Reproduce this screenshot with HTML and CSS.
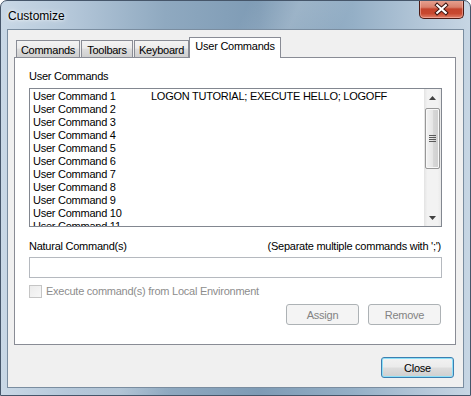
FILE: index.html
```html
<!DOCTYPE html>
<html>
<head>
<meta charset="utf-8">
<title>Customize</title>
<link rel="stylesheet" href="styles.css">
</head>
<body>
<div class="window">
  <div class="titlebar">
    <span class="title">Customize</span>
    <div class="close-x">
      <svg width="45" height="19" viewBox="0 0 45 19">
        <path d="M18 5 L27 13 M27 5 L18 13" stroke="#3b1410" stroke-width="4.2" stroke-linecap="square" fill="none"/>
        <path d="M18 5 L27 13 M27 5 L18 13" stroke="#ffffff" stroke-width="2.2" stroke-linecap="square" fill="none"/>
      </svg>
    </div>
  </div>
  <div class="client">
    <div class="tabs">
      <div class="tab tab-commands">Commands</div>
      <div class="tab tab-toolbars">Toolbars</div>
      <div class="tab tab-keyboard">Keyboard</div>
      <div class="tab tab-active">User Commands</div>
    </div>
    <div class="panel">
      <div class="label">User Commands</div>
      <div class="listbox">
        <div class="rows">
          <div class="row"><span class="c1">User Command 1</span><span class="c2">LOGON TUTORIAL; EXECUTE HELLO; LOGOFF</span></div>
          <div class="row"><span class="c1">User Command 2</span><span class="c2"></span></div>
          <div class="row"><span class="c1">User Command 3</span><span class="c2"></span></div>
          <div class="row"><span class="c1">User Command 4</span><span class="c2"></span></div>
          <div class="row"><span class="c1">User Command 5</span><span class="c2"></span></div>
          <div class="row"><span class="c1">User Command 6</span><span class="c2"></span></div>
          <div class="row"><span class="c1">User Command 7</span><span class="c2"></span></div>
          <div class="row"><span class="c1">User Command 8</span><span class="c2"></span></div>
          <div class="row"><span class="c1">User Command 9</span><span class="c2"></span></div>
          <div class="row"><span class="c1">User Command 10</span><span class="c2"></span></div>
          <div class="row"><span class="c1">User Command 11</span><span class="c2"></span></div>
        </div>
        <div class="scrollbar">
          <div class="sb-btn">
            <svg width="7" height="4" viewBox="0 0 7 4"><path d="M3.5 0 L7 4 L0 4 Z" fill="#404040"/></svg>
          </div>
          <div class="sb-thumb">
            <div class="grip"></div>
          </div>
          <div class="sb-fill"></div>
          <div class="sb-btn">
            <svg width="7" height="4" viewBox="0 0 7 4"><path d="M0 0 L7 0 L3.5 4 Z" fill="#404040"/></svg>
          </div>
        </div>
      </div>
      <div class="label-row">
        <span>Natural Command(s)</span>
        <span>(Separate multiple commands with ';')</span>
      </div>
      <div class="textbox"></div>
      <div class="check-row">
        <span class="checkbox"></span>
        <span class="check-label">Execute command(s) from Local Environment</span>
      </div>
      <div class="button-row">
        <div class="button disabled">Assign</div>
        <div class="button disabled">Remove</div>
      </div>
    </div>
    <div class="footer">
      <div class="button default">Close</div>
    </div>
  </div>
</div>
</body>
</html>
```

FILE: styles.css
```css
html, body {
  margin: 0;
  padding: 0;
}
body {
  width: 471px;
  height: 396px;
  overflow: hidden;
  font-family: "Liberation Sans", Arial, sans-serif;
  font-size: 11px;
  letter-spacing: -0.25px;
  color: #000;
  background: #ffffff;
}
.window {
  width: 471px;
  height: 396px;
  box-sizing: border-box;
  border: 1px solid #46566a;
  border-radius: 7px 7px 0 0;
  display: flex;
  flex-direction: column;
  background:
    linear-gradient(115deg, rgba(255,255,255,0) 0%, rgba(255,255,255,0) 38%, rgba(255,255,255,0.18) 46%, rgba(255,255,255,0) 54%, rgba(255,255,255,0) 100%),
    linear-gradient(to right, #c9d8e6 0%, #b4c7d9 15%, #8fa9c0 35%, #7e9bb5 55%, #94afc6 75%, #b8cadb 92%, #c7d6e4 100%);
  overflow: hidden;
}
.titlebar {
  height: 28px;
  display: flex;
  justify-content: space-between;
  align-items: flex-start;
  padding-left: 7px;
}
.title {
  font-size: 12px;
  letter-spacing: 0;
  line-height: 12px;
  margin-top: 9px;
  color: #000;
  text-shadow: 0 0 6px rgba(255,255,255,0.9), 0 0 3px rgba(255,255,255,0.9);
}
.close-x {
  width: 45px;
  height: 19px;
  margin-right: 6px;
  margin-top: -1px;
  box-sizing: border-box;
  border: 1px solid #4c1a14;
  border-top: none;
  border-radius: 0 0 5px 5px;
  background: linear-gradient(to bottom, #e8a493 0%, #d9806c 40%, #c4442d 50%, #c8482f 75%, #e0806a 100%);
  box-shadow: inset 0 0 0 1px rgba(255,200,190,0.5);
  display: flex;
}
.client {
  margin: 0 6px 7px 6px;
  flex: 1;
  border: 1px solid #7a8da0;
  background: #f0f0f0;
  display: flex;
  flex-direction: column;
}
.tabs {
  display: flex;
  align-items: flex-end;
  height: 20px;
  margin-top: 7px;
  padding-left: 8px;
  position: relative;
  z-index: 1;
}
.tab {
  height: 17px;
  box-sizing: border-box;
  border: 1px solid #898c95;
  border-bottom: none;
  background: linear-gradient(to bottom, #f3f3f3 0%, #ebebeb 45%, #dddddd 50%, #cfcfcf 100%);
  line-height: 18px;
  text-align: center;
  margin-right: 1px;
}
.tab-commands { width: 64px; }
.tab-toolbars { width: 52px; }
.tab-keyboard { width: 55px; }
.tab-active {
  width: 92px;
  height: 21px;
  margin-bottom: -1px;
  margin-left: -1px;
  background: #ffffff;
  line-height: 17px;
}
.panel {
  margin-left: 6px;
  width: 442px;
  box-sizing: border-box;
  border: 1px solid #898c95;
  background: #ffffff;
  padding: 12px 13px 19px 14px;
  display: flex;
  flex-direction: column;
}
.label {
  line-height: 13px;
  height: 13px;
}
.listbox {
  margin-top: 5px;
  height: 139px;
  box-sizing: border-box;
  border: 1px solid #828790;
  background: #ffffff;
  display: flex;
}
.rows {
  flex: 1;
  overflow: hidden;
  padding: 1px 0 0 3px;
}
.row {
  display: grid;
  grid-template-columns: 118px 1fr;
  height: 13px;
  line-height: 13px;
  white-space: nowrap;
}
.scrollbar {
  width: 17px;
  display: flex;
  flex-direction: column;
  background: linear-gradient(to right, #e3e3e3 0%, #f2f2f2 20%, #f2f2f2 80%, #e9e9e9 100%);
}
.sb-btn {
  height: 17px;
  display: flex;
  align-items: center;
  justify-content: center;
}
.sb-thumb {
  margin: 2px 1px 0 1px;
  height: 61px;
  box-sizing: border-box;
  border: 1px solid #979797;
  border-radius: 2px;
  background: linear-gradient(to right, #f3f3f3 0%, #e6e6e6 50%, #d8d8d8 51%, #cfcfcf 100%);
  box-shadow: inset 0 0 0 1px #f8f8f8;
  display: flex;
  align-items: center;
  justify-content: center;
}
.grip {
  width: 7px;
  height: 7px;
  background: repeating-linear-gradient(to bottom, #5a5a5a 0, #5a5a5a 1px, transparent 1px, transparent 2px);
}
.sb-fill {
  flex: 1;
}
.label-row {
  margin-top: 13px;
  height: 13px;
  line-height: 13px;
  display: flex;
  justify-content: space-between;
  padding-right: 1px;
}
.textbox {
  margin-top: 4px;
  height: 21px;
  box-sizing: border-box;
  background: #ffffff;
  border: 1px solid #b5b9bf;
}
.check-row {
  margin-top: 6px;
  height: 14px;
  display: flex;
  align-items: center;
}
.checkbox {
  width: 13px;
  height: 13px;
  box-sizing: border-box;
  border: 1px solid #c5c5c5;
  background: linear-gradient(135deg, #ececec 0%, #f7f7f7 100%);
  margin-right: 4px;
}
.check-label {
  color: #8d8d8d;
  line-height: 13px;
}
.button-row {
  margin-top: 6px;
  display: flex;
  justify-content: flex-end;
  gap: 9px;
  padding-right: 1px;
}
.button {
  width: 73px;
  height: 21px;
  box-sizing: border-box;
  border-radius: 3px;
  display: flex;
  align-items: center;
  justify-content: center;
}
.button.disabled {
  border: 1px solid #adb2b5;
  background: #f4f4f4;
  color: #838383;
}
.footer {
  flex: 1;
  display: flex;
  justify-content: flex-end;
  align-items: flex-start;
  padding: 12px 9px 0 0;
}
.button.default {
  width: 73px;
  border: 1px solid #3c7fb1;
  background: linear-gradient(to bottom, #f2f2f2 0%, #ebebeb 48%, #dddddd 52%, #cfcfcf 100%);
  box-shadow: inset 0 0 0 1px #8de0f8;
  color: #000;
}
```
